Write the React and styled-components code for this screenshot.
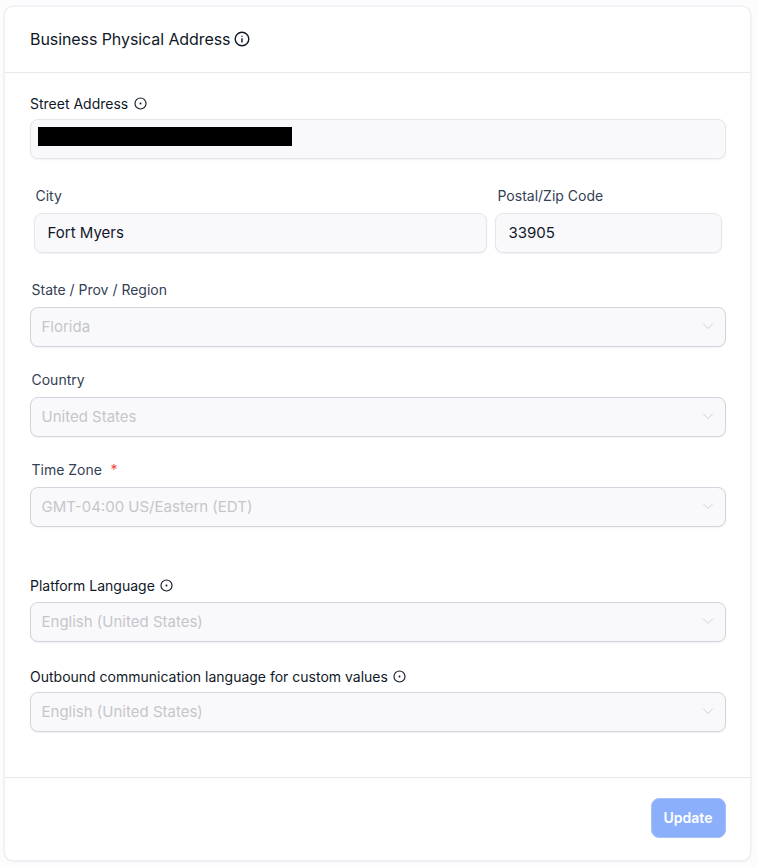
import React from 'react';
import styled, { createGlobalStyle } from 'styled-components';

const GlobalStyle = createGlobalStyle`
  html, body {
    margin: 0;
    padding: 0;
    background: #fcfcfd;
    font-family: Inter, "Noto Sans", sans-serif;
  }
  * { box-sizing: border-box; }
`;

const Page = styled.div`
  width: 757px;
  height: 867px;
  padding: 7px 7px 7px 5px;
`;

const Card = styled.section`
  height: 853px;
  display: flex;
  flex-direction: column;
  background: #fff;
  border-radius: 8px;
  box-shadow: 0 0 0 1.5px #eeeff4, 0 1px 3px rgba(16, 24, 40, 0.1);
`;

const Header = styled.header`
  height: 66px;
  flex: none;
  display: flex;
  align-items: center;
  gap: 4px;
  padding: 0 24px 1px 25px;
  border-bottom: 1px solid #e8e9ed;
`;

const Title = styled.h2`
  margin: 0;
  font-size: 16px;
  line-height: 24px;
  font-weight: 400;
  letter-spacing: -0.08px;
  color: #101828;
`;

const Body = styled.div`
  flex: 1;
  padding: 21px 24px 0 25px;
`;

const Field = styled.div`
  display: flex;
  flex-direction: column;
  gap: ${(p) => p.$gap ?? 7}px;
  margin-bottom: ${(p) => p.$after ?? 23}px;
  min-width: 0;
`;

const Label = styled.label`
  display: flex;
  align-items: center;
  gap: 5.5px;
  height: 20px;
  padding-left: ${(p) => p.$inset ?? 0}px;
  font-size: 14px;
  line-height: 20px;
  font-weight: 400;
  color: ${(p) => (p.$dark ? '#101828' : '#344054')};
`;

const Required = styled.span`
  color: #f04438;
  margin-left: 3px;
`;

const Input = styled.div`
  position: relative;
  height: 40px;
  display: flex;
  align-items: center;
  padding: 0 12.5px 2px;
  font-size: 15px;
  color: #101828;
  background: #f9f9fc;
  border: 1px solid #e5e6eb;
  border-radius: 8px;
  box-shadow: 0 1px 2px rgba(16, 24, 40, 0.06);
`;

const Redaction = styled.div`
  position: absolute;
  left: 7px;
  top: 7px;
  width: 254px;
  height: 19px;
  background: #000;
`;

const CityRow = styled.div`
  display: grid;
  grid-template-columns: 453px 227px;
  gap: 8px;
  padding: 0 4px;
`;

const Select = styled.div`
  height: 40px;
  display: flex;
  align-items: center;
  justify-content: space-between;
  padding: 0 11px 2px 10.5px;
  font-size: 15px;
  color: #c6c6c8;
  background: #f9f9fc;
  border: 1px solid #d2d4de;
  border-radius: 8px;
  box-shadow: 0 1px 2px rgba(16, 24, 40, 0.06);
`;

const Footer = styled.footer`
  height: 83px;
  flex: none;
  display: flex;
  justify-content: flex-end;
  padding: 20px 24px 0 25px;
  border-top: 1px solid #e8e9ed;
`;

const UpdateButton = styled.button`
  width: 75px;
  height: 40px;
  padding: 0 1px 1px 0;
  font: 600 14px Inter, sans-serif;
  color: #fff;
  background: #8bafFa;
  border: 1px solid #a5c0fb;
  border-radius: 8px;
`;

const IconSvg = styled.svg`
  flex: none;
  margin-bottom: ${(p) => (p.$lift ? 2 : 0)}px;
`;

const InfoIcon = ({ size = 14, dotOnly = false }) => (
  <IconSvg $lift={dotOnly} width={size} height={size} viewBox="0 0 16 16" fill="none" stroke="#101828" strokeWidth={1.4} strokeLinecap="round">
    <circle cx="8" cy="8" r="6.8" />
    {dotOnly ? <circle cx="8" cy="8" r="1.2" fill="#101828" stroke="none" /> : <path d="M8 7.6v3.4M8 5.1v.1" />}
  </IconSvg>
);

const Chevron = () => (
  <svg width="12" height="12" viewBox="0 0 12 12" fill="none" stroke="#cfd0d6" strokeWidth="1" strokeLinecap="round" strokeLinejoin="round">
    <path d="M1.5 4l4.5 4.5L10.5 4" />
  </svg>
);

const SelectField = ({ label, value, inset, gap, after, dark, children }) => (
  <Field $gap={gap} $after={after}>
    <Label $inset={inset} $dark={dark}>
      {label}
      {children}
    </Label>
    <Select>
      {value}
      <Chevron />
    </Select>
  </Field>
);

const App = () => {
  return (
    <Page>
      <GlobalStyle />
      <Card>
        <Header>
          <Title>Business Physical Address</Title>
          <InfoIcon size={16} />
        </Header>
        <Body>
          <Field $gap={5} $after={27}>
            <Label $dark>
              Street Address
              <InfoIcon size={13} dotOnly />
            </Label>
            <Input>
              <Redaction />
            </Input>
          </Field>
          <CityRow>
            <Field $after={27}>
              <Label $inset={1.5}>City</Label>
              <Input>Fort Myers</Input>
            </Field>
            <Field $after={27}>
              <Label $inset={2.5}>Postal/Zip Code</Label>
              <Input>33905</Input>
            </Field>
          </CityRow>
          <SelectField label="State / Prov / Region" value="Florida" inset={1.5} />
          <SelectField label="Country" value="United States" inset={1.5} />
          <SelectField label="Time Zone" value="GMT-04:00 US/Eastern (EDT)" inset={1.5} after={49}>
            <Required>*</Required>
          </SelectField>
          <SelectField label="Platform Language" value="English (United States)" gap={6} after={25} dark>
            <InfoIcon size={13} dotOnly />
          </SelectField>
          <SelectField label="Outbound communication language for custom values" value="English (United States)" gap={5} after={0} dark>
            <InfoIcon size={13} dotOnly />
          </SelectField>
        </Body>
        <Footer>
          <UpdateButton>Update</UpdateButton>
        </Footer>
      </Card>
    </Page>
  );
};

export default App;
